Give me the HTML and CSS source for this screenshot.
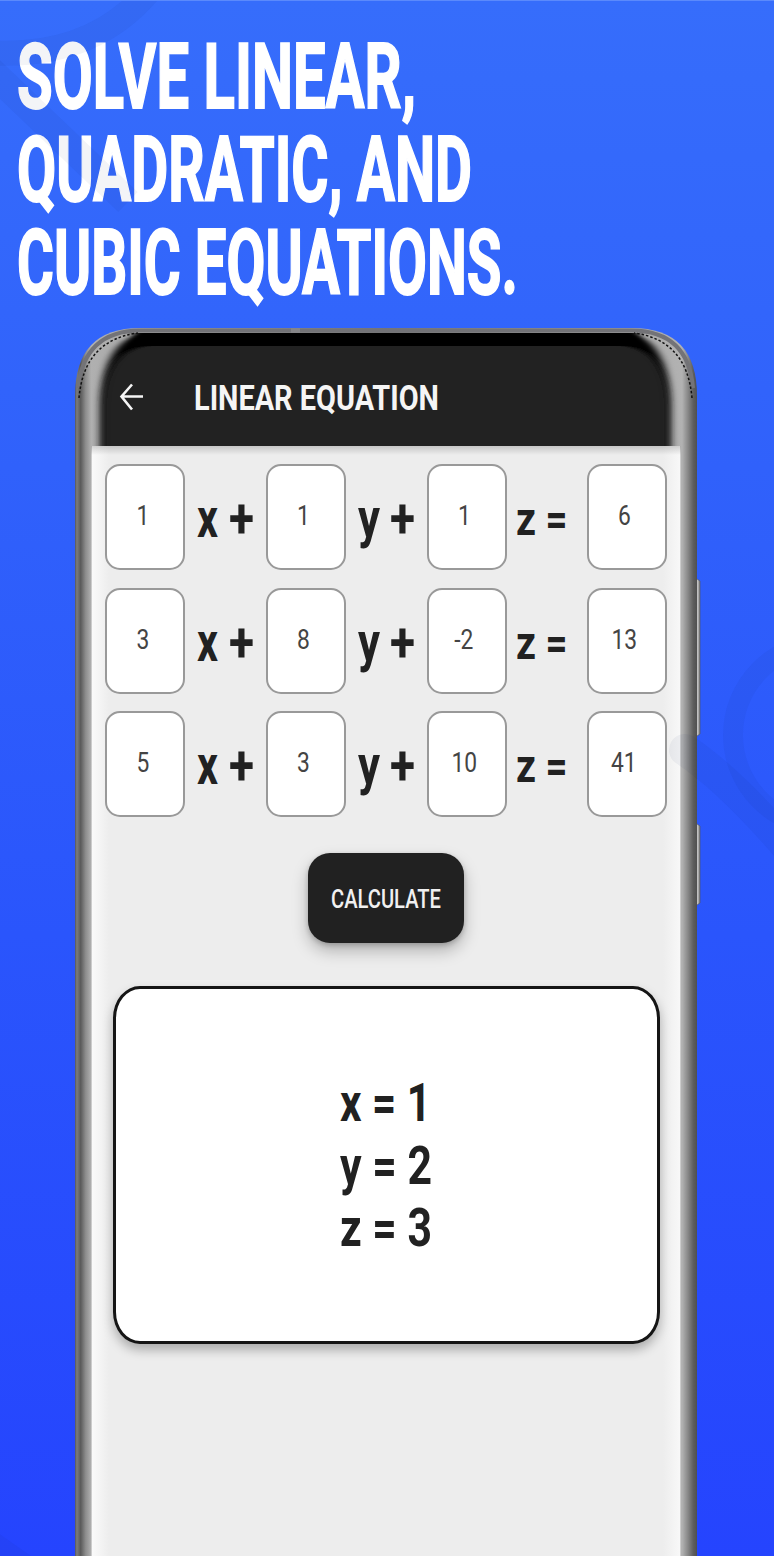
FILE: index.html
```
<!DOCTYPE html>
<html lang="en">
<head>
<meta charset="utf-8">
<title>Linear Equation</title>
<link rel="stylesheet" href="styles.css">
</head>
<body>
<main class="poster">
  <h1 class="headline">
    <svg class="headline-text" width="640" height="327" viewBox="0 0 640 327">
      <text x="17" y="107.500" textLength="399" lengthAdjust="spacingAndGlyphs">SOLVE LINEAR,</text>
      <text x="17" y="201" textLength="455" lengthAdjust="spacingAndGlyphs">QUADRATIC, AND</text>
      <text x="17" y="293.500" textLength="501" lengthAdjust="spacingAndGlyphs">CUBIC EQUATIONS.</text>
    </svg>
  </h1>

  <section class="phone">
    <svg class="frame" width="640" height="1236" viewBox="70 320 640 1236">
      <defs>
        <linearGradient id="metal" gradientUnits="userSpaceOnUse" x1="75" y1="0" x2="697" y2="0">
          <stop offset="0" stop-color="#55565a"/><stop offset=".003" stop-color="#7c7c7c"/>
          <stop offset=".009" stop-color="#5a5a5a"/><stop offset=".017" stop-color="#8c8c8c"/>
          <stop offset=".026" stop-color="#b0b0b0"/><stop offset=".5" stop-color="#777"/>
          <stop offset=".976" stop-color="#b2b2b2"/><stop offset=".986" stop-color="#858585"/>
          <stop offset=".994" stop-color="#5e5e5e"/><stop offset="1" stop-color="#505050"/>
        </linearGradient>
        <linearGradient id="key"><stop offset="0" stop-color="#555"/><stop offset=".6" stop-color="#c4c4c4"/><stop offset="1" stop-color="#777"/></linearGradient>
        <filter id="soft" x="-5%" y="-5%" width="110%" height="110%"><feGaussianBlur stdDeviation="4 .4"/></filter>
      </defs>
      <path d="M694 577l6 4v153l-6 4zM694 822l6 4v77l-6 4z" fill="url(#key)" stroke="#555" stroke-width=".6"/>
      <path d="M75 1556V396Q75 328 140 328H632Q697 328 697 396V1556Z" fill="url(#metal)"/>
      <path d="M78 388Q84 331 140 330.500H632Q688 331 693 388" fill="none" stroke="#737377" stroke-width="4"/>
      <path d="M291 328h9v5h-9z" fill="#858588"/>
      <path d="M102 448V398Q104 336 150 333H624Q667 336 669 398V448Z" fill="#000" filter="url(#soft)"/>
      <path d="M134 333H638V347H134Z" fill="#000" filter="url(#soft)"/>
      <path d="M102 448V406Q104 349 150 346H622Q667 349 669 406V448Z" fill="#212121" filter="url(#soft)"/>
      <path d="M79 398Q84 340 138 333M692 398Q687 340 634 333" fill="none" stroke="#111" stroke-width="1.500" stroke-dasharray="2.500 2"/>
    </svg>

    <div class="screen">
      <header class="bar">
        <svg class="back" width="26" height="30" viewBox="0 0 26 30"><path d="M25 13.500H3.500M14 1.500L3.500 13.500L14 26.500" fill="none" stroke="#f5f5f5" stroke-width="2.600"/></svg>
        <svg class="title" width="250" height="40" viewBox="0 0 250 40"><text x="0" y="31.500" textLength="245" lengthAdjust="spacingAndGlyphs">LINEAR EQUATION</text></svg>
      </header>

      <div class="content">
        <div class="equations">
          <div class="field"><svg width="76" height="102"><text x="36" y="59" transform="translate(7 0) scale(.8 1)">1</text></svg></div>
          <svg class="term" width="81" height="105"><text x="12" y="73" textLength="21" lengthAdjust="spacingAndGlyphs">x</text><text x="44" y="73" textLength="25" lengthAdjust="spacingAndGlyphs">+</text></svg>
          <div class="field"><svg width="76" height="102"><text x="36" y="59" transform="translate(6.500 0) scale(.8 1)">1</text></svg></div>
          <svg class="term" width="81" height="105"><text x="12" y="73" textLength="22" lengthAdjust="spacingAndGlyphs">y</text><text x="44" y="73" textLength="25" lengthAdjust="spacingAndGlyphs">+</text></svg>
          <div class="field"><svg width="76" height="102"><text x="36" y="59" transform="translate(6.500 0) scale(.8 1)">1</text></svg></div>
          <svg class="term small" width="81" height="105"><text x="9" y="71" textLength="20" lengthAdjust="spacingAndGlyphs">z</text><text x="38.500" y="71" textLength="22" lengthAdjust="spacingAndGlyphs">=</text></svg>
          <div class="field"><svg width="76" height="102"><text x="36" y="59" transform="translate(6.500 0) scale(.8 1)">6</text></svg></div>

          <div class="field"><svg width="76" height="102"><text x="36" y="59" transform="translate(7 0) scale(.8 1)">3</text></svg></div>
          <svg class="term" width="81" height="105"><text x="12" y="73" textLength="21" lengthAdjust="spacingAndGlyphs">x</text><text x="44" y="73" textLength="25" lengthAdjust="spacingAndGlyphs">+</text></svg>
          <div class="field"><svg width="76" height="102"><text x="36" y="59" transform="translate(6.500 0) scale(.8 1)">8</text></svg></div>
          <svg class="term" width="81" height="105"><text x="12" y="73" textLength="22" lengthAdjust="spacingAndGlyphs">y</text><text x="44" y="73" textLength="25" lengthAdjust="spacingAndGlyphs">+</text></svg>
          <div class="field"><svg width="76" height="102"><text x="36" y="59" transform="translate(6 0) scale(.8 1)">-2</text></svg></div>
          <svg class="term small" width="81" height="105"><text x="9" y="71" textLength="20" lengthAdjust="spacingAndGlyphs">z</text><text x="38.500" y="71" textLength="22" lengthAdjust="spacingAndGlyphs">=</text></svg>
          <div class="field"><svg width="76" height="102"><text x="36" y="59" transform="translate(6.500 0) scale(.8 1)">13</text></svg></div>

          <div class="field"><svg width="76" height="102"><text x="36" y="59" transform="translate(7 0) scale(.8 1)">5</text></svg></div>
          <svg class="term" width="81" height="105"><text x="12" y="73" textLength="21" lengthAdjust="spacingAndGlyphs">x</text><text x="44" y="73" textLength="25" lengthAdjust="spacingAndGlyphs">+</text></svg>
          <div class="field"><svg width="76" height="102"><text x="36" y="59" transform="translate(6.500 0) scale(.8 1)">3</text></svg></div>
          <svg class="term" width="81" height="105"><text x="12" y="73" textLength="22" lengthAdjust="spacingAndGlyphs">y</text><text x="44" y="73" textLength="25" lengthAdjust="spacingAndGlyphs">+</text></svg>
          <div class="field"><svg width="76" height="102"><text x="36" y="59" transform="translate(6.500 0) scale(.8 1)">10</text></svg></div>
          <svg class="term small" width="81" height="105"><text x="9" y="71" textLength="20" lengthAdjust="spacingAndGlyphs">z</text><text x="38.500" y="71" textLength="22" lengthAdjust="spacingAndGlyphs">=</text></svg>
          <div class="field"><svg width="76" height="102"><text x="36" y="59" transform="translate(6 0) scale(.8 1)">41</text></svg></div>
        </div>

        <button class="calculate"><svg width="112" height="40"><text x="1" y="29.500" textLength="110" lengthAdjust="spacingAndGlyphs">CALCULATE</text></svg></button>

        <div class="result">
          <svg width="96" height="200">
            <text x="2" y="46.500" textLength="91" lengthAdjust="spacingAndGlyphs">x = 1</text>
            <text x="2" y="109.500" textLength="92" lengthAdjust="spacingAndGlyphs">y = 2</text>
            <text x="2" y="172" textLength="92" lengthAdjust="spacingAndGlyphs">z = 3</text>
          </svg>
        </div>
      </div>
    </div>
  </section>

  <svg class="watermark" width="774" height="1556" viewBox="0 0 774 1556">
    <g fill="none" stroke="#183060" stroke-opacity=".05">
      <path d="M-20 52Q90 62 150 -10" stroke-width="25"/>
      <path d="M-10 70L128 202" stroke-width="28"/>
      <circle cx="825" cy="735" r="92" stroke-width="20"/>
      <path d="M685 750Q730 780 790 850" stroke-width="32" stroke-linecap="round"/>
      <path d="M-20 1535L30 1570" stroke-width="24"/>
    </g>
  </svg>
</main>
</body>
</html>
```
FILE: styles.css
```
body {
  margin: 0;
  font-family: Roboto, "Liberation Sans", sans-serif;
}

svg {
  display: block;
}

.poster {
  position: relative;
  box-sizing: border-box;
  width: 774px;
  height: 1556px;
  overflow: hidden;
  border-top: 1px solid #5b8afc;
  background: linear-gradient(#366dfb, #3061fb 30%, #2a55fc 60%, #2544fe);
}

.headline {
  height: 327px;
  margin: -1px 0 0;
}

.headline-text text {
  font-size: 91px;
  font-weight: 700;
  fill: #fff;
  stroke: #fff;
  stroke-width: 1.800px;
}

.watermark {
  position: absolute;
  top: -1px;
  left: 0;
  pointer-events: none;
}

.phone {
  position: relative;
  height: 1229px;
}

.frame {
  position: absolute;
  top: -7px;
  left: 70px;
}

.screen {
  position: relative;
  width: 590px;
  margin-left: 91px;
}

.bar {
  display: flex;
  align-items: center;
  box-sizing: border-box;
  height: 119px;
  padding: 22px 0 0 27px;
}

.title {
  margin-left: 50px;
}

.title text {
  font-size: 35px;
  font-weight: 700;
  fill: #f5f5f5;
}

.content {
  display: flex;
  flex-direction: column;
  align-items: center;
  box-sizing: border-box;
  height: 1110px;
  padding-top: 18px;
  background:
    linear-gradient(rgba(0, 0, 0, .16), rgba(0, 0, 0, 0) 9px),
    linear-gradient(90deg, #ccc 0 1px, #fafafa 1px, #ededed 18px 572px, #f8f8f8 589px, #ccc 589px);
}

.equations {
  display: grid;
  grid-template-columns: 80px 81px 80px 81px 80px 80px 80px;
  row-gap: 17.500px;
  margin-left: -1px;
}

.field {
  box-sizing: border-box;
  width: 80px;
  height: 106px;
  border: 2px solid #999;
  border-radius: 15px;
  background: #fff;
}

.field text {
  font-size: 28.500px;
  text-anchor: middle;
  fill: #444;
}

.term text {
  font-size: 55px;
  font-weight: 700;
  fill: #212121;
}

.term.small text {
  font-size: 47px;
}

.calculate {
  display: flex;
  align-items: center;
  justify-content: center;
  box-sizing: border-box;
  width: 156px;
  height: 90px;
  margin-top: 36px;
  padding: 0;
  border: 0;
  border-radius: 22px;
  background: #212121;
  box-shadow: 0 8px 16px rgba(0, 0, 0, .25), 0 2px 5px rgba(0, 0, 0, .2);
}

.calculate text {
  font-family: Roboto, "Liberation Sans", sans-serif;
  font-size: 26px;
  font-weight: 500;
  fill: #f0f0f0;
}

.result {
  display: flex;
  justify-content: center;
  box-sizing: border-box;
  width: 547px;
  height: 358px;
  margin-top: 43px;
  padding-top: 85px;
  border: 3px solid #151515;
  border-radius: 27px / 32px;
  background: #fff;
  box-shadow: 0 6px 11px rgba(0, 0, 0, .28);
}

.result text {
  font-size: 54px;
  font-weight: 700;
  fill: #212121;
}
```
